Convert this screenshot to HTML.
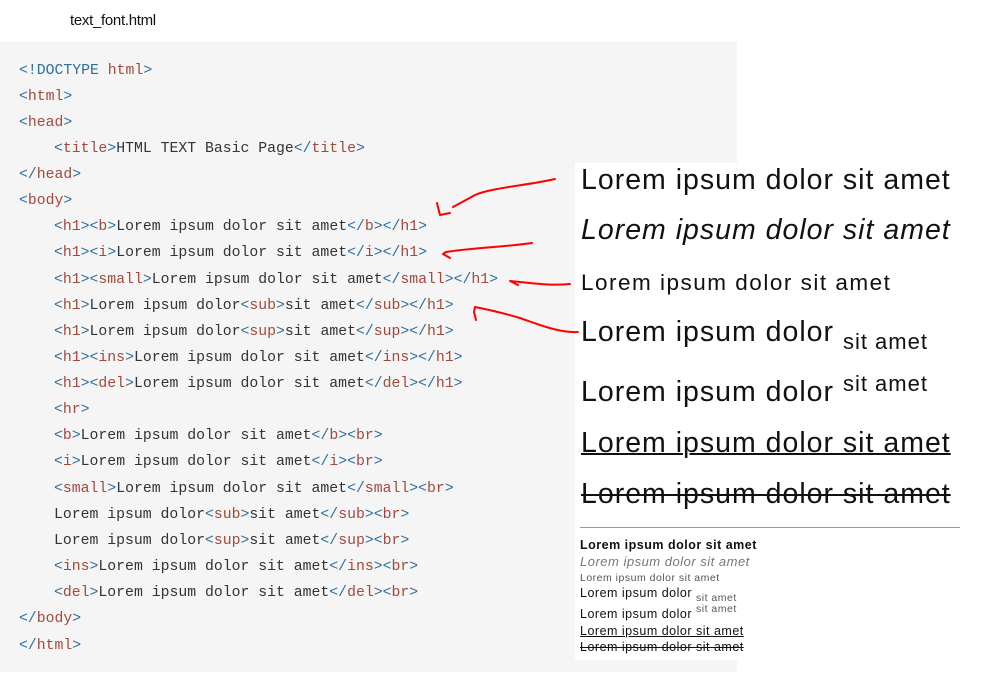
<!DOCTYPE html>
<html><head><meta charset="utf-8"><style>
body{margin:0;width:990px;height:698px;background:#fff;position:relative;overflow:hidden;font-family:"Liberation Sans",sans-serif}
.title{position:absolute;left:70px;top:12px;font-size:15px;color:#111;letter-spacing:-0.3px}
.code{position:absolute;left:0;top:42px;width:737px;height:630px;background:#f5f5f5}
.ln{position:absolute;font-family:"Liberation Mono","DejaVu Sans Mono",monospace;font-size:14.8px;color:#333;white-space:pre;line-height:18px}
.t{color:#2e6e9c}.n{color:#a2493c}
.panel{position:absolute;left:575px;top:163px;width:390px;height:497px;background:#fff}
.h{position:absolute;left:6px;font-size:28.5px;color:#111;white-space:nowrap;line-height:34px;letter-spacing:1px}
.s{position:absolute;left:5px;font-size:12.5px;color:#111;white-space:nowrap;line-height:15px;letter-spacing:0.5px}
</style></head><body>
<div class="title">text_font.html</div>
<div class="code">
<div class="ln" style="left:19px;top:20px"><span class="t">&lt;!DOCTYPE </span><span class="n">html</span><span class="t">&gt;</span></div>
<div class="ln" style="left:19px;top:46px"><span class="t">&lt;</span><span class="n">html</span><span class="t">&gt;</span></div>
<div class="ln" style="left:19px;top:72px"><span class="t">&lt;</span><span class="n">head</span><span class="t">&gt;</span></div>
<div class="ln" style="left:54px;top:98px"><span class="t">&lt;</span><span class="n">title</span><span class="t">&gt;</span>HTML TEXT Basic Page<span class="t">&lt;/</span><span class="n">title</span><span class="t">&gt;</span></div>
<div class="ln" style="left:19px;top:124px"><span class="t">&lt;/</span><span class="n">head</span><span class="t">&gt;</span></div>
<div class="ln" style="left:19px;top:150px"><span class="t">&lt;</span><span class="n">body</span><span class="t">&gt;</span></div>
<div class="ln" style="left:54px;top:176px"><span class="t">&lt;</span><span class="n">h1</span><span class="t">&gt;&lt;</span><span class="n">b</span><span class="t">&gt;</span>Lorem ipsum dolor sit amet<span class="t">&lt;/</span><span class="n">b</span><span class="t">&gt;&lt;/</span><span class="n">h1</span><span class="t">&gt;</span></div>
<div class="ln" style="left:54px;top:202px"><span class="t">&lt;</span><span class="n">h1</span><span class="t">&gt;&lt;</span><span class="n">i</span><span class="t">&gt;</span>Lorem ipsum dolor sit amet<span class="t">&lt;/</span><span class="n">i</span><span class="t">&gt;&lt;/</span><span class="n">h1</span><span class="t">&gt;</span></div>
<div class="ln" style="left:54px;top:229px"><span class="t">&lt;</span><span class="n">h1</span><span class="t">&gt;&lt;</span><span class="n">small</span><span class="t">&gt;</span>Lorem ipsum dolor sit amet<span class="t">&lt;/</span><span class="n">small</span><span class="t">&gt;&lt;/</span><span class="n">h1</span><span class="t">&gt;</span></div>
<div class="ln" style="left:54px;top:255px"><span class="t">&lt;</span><span class="n">h1</span><span class="t">&gt;</span>Lorem ipsum dolor<span class="t">&lt;</span><span class="n">sub</span><span class="t">&gt;</span>sit amet<span class="t">&lt;/</span><span class="n">sub</span><span class="t">&gt;&lt;/</span><span class="n">h1</span><span class="t">&gt;</span></div>
<div class="ln" style="left:54px;top:281px"><span class="t">&lt;</span><span class="n">h1</span><span class="t">&gt;</span>Lorem ipsum dolor<span class="t">&lt;</span><span class="n">sup</span><span class="t">&gt;</span>sit amet<span class="t">&lt;/</span><span class="n">sup</span><span class="t">&gt;&lt;/</span><span class="n">h1</span><span class="t">&gt;</span></div>
<div class="ln" style="left:54px;top:307px"><span class="t">&lt;</span><span class="n">h1</span><span class="t">&gt;&lt;</span><span class="n">ins</span><span class="t">&gt;</span>Lorem ipsum dolor sit amet<span class="t">&lt;/</span><span class="n">ins</span><span class="t">&gt;&lt;/</span><span class="n">h1</span><span class="t">&gt;</span></div>
<div class="ln" style="left:54px;top:333px"><span class="t">&lt;</span><span class="n">h1</span><span class="t">&gt;&lt;</span><span class="n">del</span><span class="t">&gt;</span>Lorem ipsum dolor sit amet<span class="t">&lt;/</span><span class="n">del</span><span class="t">&gt;&lt;/</span><span class="n">h1</span><span class="t">&gt;</span></div>
<div class="ln" style="left:54px;top:359px"><span class="t">&lt;</span><span class="n">hr</span><span class="t">&gt;</span></div>
<div class="ln" style="left:54px;top:385px"><span class="t">&lt;</span><span class="n">b</span><span class="t">&gt;</span>Lorem ipsum dolor sit amet<span class="t">&lt;/</span><span class="n">b</span><span class="t">&gt;&lt;</span><span class="n">br</span><span class="t">&gt;</span></div>
<div class="ln" style="left:54px;top:411px"><span class="t">&lt;</span><span class="n">i</span><span class="t">&gt;</span>Lorem ipsum dolor sit amet<span class="t">&lt;/</span><span class="n">i</span><span class="t">&gt;&lt;</span><span class="n">br</span><span class="t">&gt;</span></div>
<div class="ln" style="left:54px;top:438px"><span class="t">&lt;</span><span class="n">small</span><span class="t">&gt;</span>Lorem ipsum dolor sit amet<span class="t">&lt;/</span><span class="n">small</span><span class="t">&gt;&lt;</span><span class="n">br</span><span class="t">&gt;</span></div>
<div class="ln" style="left:54px;top:464px">Lorem ipsum dolor<span class="t">&lt;</span><span class="n">sub</span><span class="t">&gt;</span>sit amet<span class="t">&lt;/</span><span class="n">sub</span><span class="t">&gt;&lt;</span><span class="n">br</span><span class="t">&gt;</span></div>
<div class="ln" style="left:54px;top:490px">Lorem ipsum dolor<span class="t">&lt;</span><span class="n">sup</span><span class="t">&gt;</span>sit amet<span class="t">&lt;/</span><span class="n">sup</span><span class="t">&gt;&lt;</span><span class="n">br</span><span class="t">&gt;</span></div>
<div class="ln" style="left:54px;top:516px"><span class="t">&lt;</span><span class="n">ins</span><span class="t">&gt;</span>Lorem ipsum dolor sit amet<span class="t">&lt;/</span><span class="n">ins</span><span class="t">&gt;&lt;</span><span class="n">br</span><span class="t">&gt;</span></div>
<div class="ln" style="left:54px;top:542px"><span class="t">&lt;</span><span class="n">del</span><span class="t">&gt;</span>Lorem ipsum dolor sit amet<span class="t">&lt;/</span><span class="n">del</span><span class="t">&gt;&lt;</span><span class="n">br</span><span class="t">&gt;</span></div>
<div class="ln" style="left:19px;top:568px"><span class="t">&lt;/</span><span class="n">body</span><span class="t">&gt;</span></div>
<div class="ln" style="left:19px;top:595px"><span class="t">&lt;/</span><span class="n">html</span><span class="t">&gt;</span></div>
</div>
<div class="panel">
<div class="h" style="top:0px">Lorem ipsum dolor sit amet</div>
<div class="h" style="top:50px;font-style:italic">Lorem ipsum dolor sit amet</div>
<div class="h" style="top:103px;font-size:22.5px;letter-spacing:1.5px">Lorem ipsum dolor sit amet</div>
<div class="h" style="top:152px">Lorem ipsum dolor <span style="font-size:22px;position:relative;top:8px">sit amet</span></div>
<div class="h" style="top:212px">Lorem ipsum dolor <span style="font-size:22px;position:relative;top:-10px">sit amet</span></div>
<div class="h" style="top:263px;text-decoration:underline;text-decoration-thickness:2px">Lorem ipsum dolor sit amet</div>
<div class="h" style="top:314px;text-decoration:line-through;text-decoration-thickness:2px">Lorem ipsum dolor sit amet</div>
<div style="position:absolute;left:5px;top:364px;width:380px;height:1px;background:#999"></div>
<div class="s" style="top:375px;font-weight:bold">Lorem ipsum dolor sit amet</div>
<div class="s" style="top:391px;font-style:italic;color:#777;font-size:13px">Lorem ipsum dolor sit amet</div>
<div class="s" style="top:408px;font-size:10.5px;color:#555">Lorem ipsum dolor sit amet</div>
<div class="s" style="top:423px">Lorem ipsum dolor <span style="font-size:10.5px;color:#555;position:relative;top:4px">sit amet</span></div>
<div class="s" style="top:444px">Lorem ipsum dolor <span style="font-size:10.5px;color:#555;position:relative;top:-6px">sit amet</span></div>
<div class="s" style="top:461px;text-decoration:underline">Lorem ipsum dolor sit amet</div>
<div class="s" style="top:477px;text-decoration:line-through">Lorem ipsum dolor sit amet</div>
</div>
<svg style="position:absolute;left:0;top:0" width="990" height="698" fill="none" stroke="#f00" stroke-width="2" stroke-linecap="round" stroke-linejoin="round">
<path d="M555 179 C530 185 490 188 475 195 C468 199 462 202 453 207"/>
<path d="M437 203 L440 215 L450 213"/>
<path d="M532 243 C505 247 470 248 446 252 L443 254 L450 258"/>
<path d="M570 284 C550 286 530 283 520 282 L510 281 L518 285"/>
<path d="M578 332 C560 333 540 325 520 318 C500 312 485 309 475 307 L474 312 L476 320"/>
</svg>
</body></html>
